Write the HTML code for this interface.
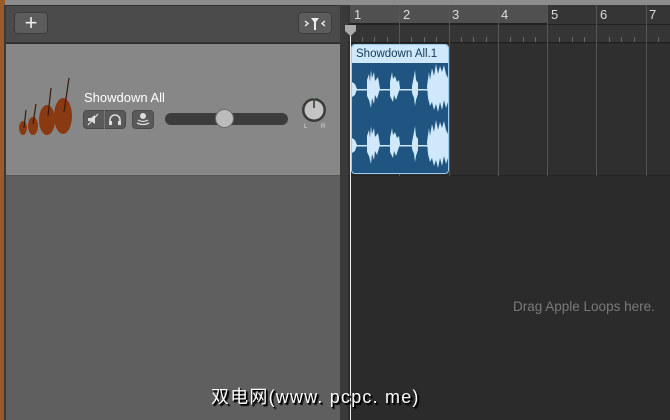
<!DOCTYPE html>
<html><head><meta charset="utf-8"><style>
*{margin:0;padding:0;box-sizing:border-box}
body{width:670px;height:420px;overflow:hidden;background:#2b2b2b;font-family:"Liberation Sans",sans-serif;position:relative}
.a{position:absolute}
</style></head><body>
<div class="a" style="left:0;top:0;width:670px;height:5px;background:#8c8c8c"></div>
<div class="a" style="left:0;top:0;width:5px;height:420px;background:#9a5a2a"></div>
<div class="a" style="left:4px;top:5px;width:2px;height:415px;background:#3a3a3a"></div>
<div class="a" style="left:6px;top:5px;width:334px;height:38px;background:#4b4b4b;border-top:1px solid #333;border-bottom:1px solid #333"></div>
<div class="a" style="left:14px;top:12px;width:34px;height:22px;background:#5c5c5c;border-radius:4px;border:1px solid #3c3c3c;color:#eee;font-size:22px;line-height:19px;text-align:center">+</div>
<div class="a" style="left:298px;top:12px;width:34px;height:22px;background:#5c5c5c;border-radius:4px;border:1px solid #3c3c3c"></div>
<svg class="a" style="left:298px;top:12px" width="34" height="22"><path d="M7 9l3 2.5-3 2.5M27 9l-3 2.5 3 2.5" stroke="#eee" stroke-width="1.4" fill="none"/><path d="M13 6h8l-3 4v8h-2v-8z" fill="#eee"/></svg>
<div class="a" style="left:6px;top:44px;width:334px;height:132px;background:#878787;border-bottom:1px solid #555"></div>
<div class="a" style="left:6px;top:176px;width:334px;height:244px;background:#5f5f5f"></div>
<svg class="a" style="left:14px;top:76px" width="62" height="62">
<g fill="#8a3a12"><ellipse cx="9" cy="52" rx="4" ry="7"/><ellipse cx="19" cy="50" rx="5" ry="9"/><ellipse cx="33" cy="44" rx="8" ry="15"/><ellipse cx="49" cy="40" rx="9" ry="18"/></g>
<g stroke="#3a1a08" stroke-width="1.2"><line x1="10" y1="52" x2="12" y2="34"/><line x1="19" y1="48" x2="22" y2="28"/><line x1="34" y1="40" x2="37" y2="12"/><line x1="50" y1="36" x2="55" y2="2"/></g>
</svg>
<div class="a" style="left:84px;top:90px;color:#fff;font-size:13px">Showdown All</div>
<div class="a" style="left:83px;top:110px;width:43px;height:19px;background:#5a5a5a;border-radius:4px;border:1px solid #4a4a4a"></div>
<div class="a" style="left:104px;top:110px;width:1px;height:19px;background:#777"></div>
<svg class="a" style="left:83px;top:110px" width="43" height="19"><path d="M5 8h3l4-3v9l-4-3H5z" fill="#ddd"/><line x1="5" y1="15" x2="15" y2="4" stroke="#ddd" stroke-width="1.3"/><path d="M27 14v-4a5 5 0 0 1 10 0v4" stroke="#ddd" stroke-width="1.5" fill="none"/><rect x="26" y="11" width="3" height="4" fill="#ddd"/><rect x="35" y="11" width="3" height="4" fill="#ddd"/></svg>
<div class="a" style="left:132px;top:110px;width:22px;height:19px;background:#5a5a5a;border-radius:4px;border:1px solid #4a4a4a"></div>
<svg class="a" style="left:132px;top:110px" width="22" height="19"><circle cx="11" cy="6" r="3" fill="#ddd"/><path d="M6 10q5 3 10 0M5 13q6 3 12 0" stroke="#ddd" stroke-width="1.3" fill="none"/></svg>
<div class="a" style="left:165px;top:113px;width:123px;height:12px;background:#3c3c3c;border-radius:6px"></div>
<div class="a" style="left:215px;top:109px;width:19px;height:19px;background:#bcbcbc;border-radius:50%;border:1px solid #6a6a6a"></div>
<svg class="a" style="left:298px;top:95px" width="32" height="36"><circle cx="16" cy="15" r="12" fill="#3a3a3a"/><circle cx="16" cy="15" r="9.5" fill="#c4c4c4"/><line x1="16" y1="4" x2="16" y2="13" stroke="#333" stroke-width="1.5"/><line x1="16" y1="2" x2="16" y2="4" stroke="#5c5" stroke-width="1"/><text x="6" y="33" font-size="6" fill="#ddd" font-family="Liberation Sans">L</text><text x="23" y="33" font-size="6" fill="#ddd" font-family="Liberation Sans">R</text></svg>
<div class="a" style="left:340px;top:5px;width:8px;height:415px;background:#3a3a3a"></div>
<div class="a" style="left:348px;top:5px;width:322px;height:38px;background:#353535;border-bottom:1px solid #1e1e1e"></div>
<div class="a" style="left:350px;top:5px;width:197px;height:19px;background:#505050;border-bottom:1px solid #222"></div>
<div class="a" style="left:348px;top:24px;width:322px;height:1px;background:#222"></div>
<div class="a" style="left:348px;top:44px;width:322px;height:132px;background:#2f2f2f;border-bottom:1px solid #242424"></div>
<svg class="a" style="left:348px;top:5px" width="322" height="171">
<g stroke="#555" stroke-width="1">
<line x1="51.5" y1="0" x2="51.5" y2="171"/><line x1="101.5" y1="0" x2="101.5" y2="171"/><line x1="150.5" y1="0" x2="150.5" y2="171"/><line x1="199.5" y1="0" x2="199.5" y2="171"/><line x1="248.5" y1="0" x2="248.5" y2="171"/><line x1="298.5" y1="0" x2="298.5" y2="171"/>
</g>
<g stroke="#666"><path d="M14.5 32v5M26.5 32v5M39.5 32v5M63.5 32v5M76.5 32v5M88.5 32v5M113.5 32v5M125.5 32v5M138.5 32v5M162.5 32v5M175.5 32v5M187.5 32v5M211.5 32v5M224.5 32v5M236.5 32v5M261.5 32v5M273.5 32v5M286.5 32v5M310.5 32v5"/></g>
<g fill="#ddd" font-size="13" font-family="Liberation Sans"><text x="6" y="14">1</text><text x="55" y="14">2</text><text x="104" y="14">3</text><text x="153" y="14">4</text><text x="203" y="14">5</text><text x="252" y="14">6</text><text x="301" y="14">7</text></g>
</svg>
<div class="a" style="left:351px;top:44px;width:98px;height:130px;background:#1f5580;border:1px solid #9ccbee;border-radius:4px;overflow:hidden">
<div style="height:18px;background:#cfe8fb;color:#143a5a;font-size:11.5px;line-height:18px;padding-left:4px">Showdown All.1</div>
</div>
<svg class="a" style="left:352px;top:62px" width="96" height="110"><g fill="#cfe8fb">
<rect x="0" y="27" width="96" height="1.5"/><rect x="0" y="83" width="96" height="1.5"/>
<path d="M0 20L3 22L5 27L3 33L0 35Z M15 18L17 12L18 20L19 8L20 16L22 10L23 19L26 15L28 27L25 37L23 33L22 42L20 36L19 46L17 38L15 34Z M38 20L40 10L41 17L43 14L45 20L47 18L48 26L46 32L44 38L42 33L41 40L38 34Z M60 24L62 14L63 8L64 18L66 21L66 32L64 38L63 44L62 36L60 31Z M75 24L77 10L78 18L80 6L82 14L84 2L86 12L88 4L90 10L92 3L94 12L96 16L96 40L94 46L92 38L90 48L88 40L86 50L84 42L82 48L80 40L78 44L76 36Z"/>
<path transform="translate(0,56)" d="M0 20L3 22L5 27L3 33L0 35Z M15 18L17 12L18 20L19 8L20 16L22 10L23 19L26 15L28 27L25 37L23 33L22 42L20 36L19 46L17 38L15 34Z M38 20L40 10L41 17L43 14L45 20L47 18L48 26L46 32L44 38L42 33L41 40L38 34Z M60 24L62 14L63 8L64 18L66 21L66 32L64 38L63 44L62 36L60 31Z M75 24L77 10L78 18L80 6L82 14L84 2L86 12L88 4L90 10L92 3L94 12L96 16L96 40L94 46L92 38L90 48L88 40L86 50L84 42L82 48L80 40L78 44L76 36Z"/>
</g></svg>
<div class="a" style="left:350px;top:30px;width:1px;height:390px;background:#eee"></div>
<svg class="a" style="left:344px;top:24px" width="13" height="13"><path d="M1 1h11v6l-5.5 5L1 7z" fill="#aaa"/></svg>
<div class="a" style="left:513px;top:299px;color:#7a7a7a;font-size:13.5px">Drag Apple Loops here.</div>
<div class="a" style="left:211px;top:383px;color:#fff;font-size:18px;letter-spacing:1.2px;white-space:nowrap;font-family:'Liberation Sans','Noto Sans CJK SC',sans-serif;text-shadow:1px 1px 0 #000,2px 2px 1px #000">双电网(www. pcpc. me)</div>
</body></html>
